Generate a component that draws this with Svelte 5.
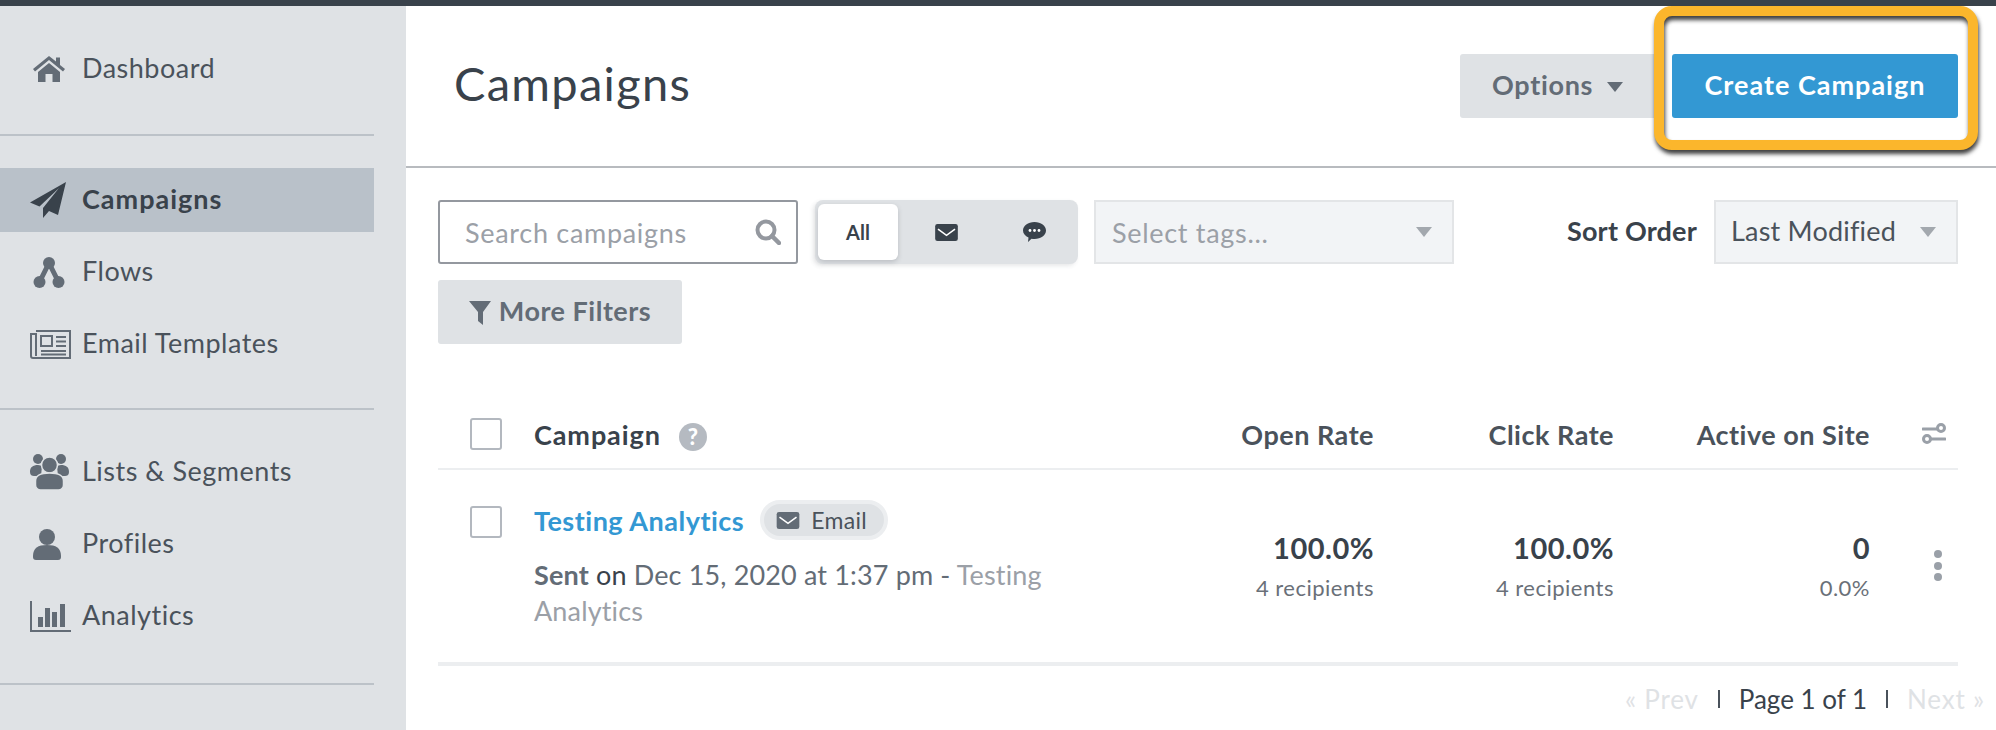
<script>
  const columns = [
    { label: 'Open Rate', value: '100.0%', sub: '4 recipients' },
    { label: 'Click Rate', value: '100.0%', sub: '4 recipients' },
    { label: 'Active on Site', value: '0', sub: '0.0%' }
  ];
</script>

{#snippet mail(w, h)}
  <svg width={w} height={h} viewBox="0 0 24 18" class="mail">
    <rect width="24" height="18" rx="2.5" fill="currentColor" />
    <path d="M3 5.5l9 6.5 9-6.5" fill="none" stroke="#fff" stroke-width="1.7" />
  </svg>
{/snippet}

{#snippet caret()}
  <svg width="16" height="10" viewBox="0 0 16 10" class="caret"><path d="M0 0h16L8 10z" fill="currentColor" /></svg>
{/snippet}

<div class="page">
  <div class="topbar"></div>
  <div class="shell">
    <aside class="sidebar">
      <nav class="group first">
        <a class="item" href="#dashboard">
          <span class="ico">
            <svg width="32" height="26" viewBox="0 0 32 26"><path d="M16 0L0 13l2 2.5L16 4l14 11.5 2-2.500-5-4V1.500h-4v4zM5 16l11-9 11 9v10h-7.500v-8h-7v8H5z" fill="currentColor" /></svg>
          </span>
          Dashboard
        </a>
      </nav>
      <nav class="group second">
        <a class="item active" href="#campaigns">
          <span class="ico">
            <svg width="36" height="36" viewBox="0 0 36 36"><path d="M36 0L0 20.500l9.500 4L29 6 13 26v10l6-7 9 4z" fill="currentColor" /></svg>
          </span>
          Campaigns
        </a>
        <a class="item" href="#flows">
          <span class="ico">
            <svg width="32" height="31" viewBox="0 0 32 31" class="flows">
              <path d="M16 6L6.500 25M16 6l9.500 19" stroke="currentColor" stroke-width="5" fill="none" />
              <circle cx="16" cy="6" r="6" fill="currentColor" />
              <circle cx="6.500" cy="25" r="6" fill="currentColor" />
              <circle cx="25.500" cy="25" r="6" fill="currentColor" />
            </svg>
          </span>
          Flows
        </a>
        <a class="item" href="#templates">
          <span class="ico">
            <svg width="41" height="29" viewBox="0 0 41 29" fill="none" stroke="currentColor" stroke-width="2">
              <path d="M6 1h34v27H3a2 2 0 0 1-2-2V4h5v22" />
              <rect x="11" y="6" width="11" height="10" />
              <path d="M26 7h10M26 11.500h10M26 16h10M11 21h25M11 24.500h25" />
            </svg>
          </span>
          Email Templates
        </a>
      </nav>
      <nav class="group third">
        <a class="item" href="#lists">
          <span class="ico">
            <svg width="39" height="36" viewBox="0 0 39 36" fill="currentColor">
              <circle cx="8" cy="5" r="5" />
              <circle cx="31" cy="5" r="5" />
              <path d="M0 18c0-5 3-7 8-7 2 0 3 1 4 1l-1 10H4c-2 0-4-1-4-4zM39 18c0-5-3-7-8-7-2 0-3 1-4 1l1 10h7c2 0 4-1 4-4z" />
              <circle cx="19.500" cy="11" r="8" stroke="#dfe2e5" stroke-width="1.500" />
              <path d="M5.500 27c0-6 5-8 14-8s14 2 14 8v4a5 5 0 0 1-5 5H10.500a5 5 0 0 1-5-5z" stroke="#dfe2e5" stroke-width="1.500" />
            </svg>
          </span>
          Lists &amp; Segments
        </a>
        <a class="item" href="#profiles">
          <span class="ico">
            <svg width="28" height="31" viewBox="0 0 28 31" class="profile" fill="currentColor">
              <circle cx="14" cy="8" r="8" />
              <path d="M0 27c0-8 5-11 14-11s14 3 14 11v1a3 3 0 0 1-3 3H3a3 3 0 0 1-3-3z" />
            </svg>
          </span>
          Profiles
        </a>
        <a class="item" href="#analytics">
          <span class="ico">
            <svg width="41" height="31" viewBox="0 0 41 31" fill="currentColor">
              <path d="M1 0v30h40" fill="none" stroke="currentColor" stroke-width="2" />
              <rect x="8" y="16" width="5" height="10" />
              <rect x="15" y="7" width="5" height="19" />
              <rect x="22" y="11" width="5" height="15" />
              <rect x="30" y="3" width="5" height="23" />
            </svg>
          </span>
          Analytics
        </a>
      </nav>
    </aside>

    <main class="main">
      <header class="header">
        <h1>Campaigns</h1>
        <div class="actions">
          <button class="btn options">Options {@render caret()}</button>
          <button class="btn create">Create Campaign</button>
          <div class="callout"></div>
        </div>
      </header>

      <section class="content">
        <div class="filters">
          <div class="search">
            <span>Search campaigns</span>
            <svg width="26" height="26" viewBox="0 0 26 26" fill="none" stroke="#94989f">
              <circle cx="11" cy="11" r="8.500" stroke-width="4" />
              <path d="M17 17l7 7" stroke-width="4.500" stroke-linecap="round" />
            </svg>
          </div>
          <div class="toggle">
            <button class="seg on">All</button>
            <button class="seg">{@render mail(23, 17)}</button>
            <button class="seg">
              <svg width="23" height="20" viewBox="0 0 23 20">
                <path d="M11.500 0C18 0 23 3.700 23 8.500S18 17 11.500 17c-1 0-2 0-3-.3L5 20l.5-4.500C2.200 14 0 11.500 0 8.500 0 3.700 5 0 11.500 0z" fill="#39424b" />
                <circle cx="7" cy="8.500" r="1.400" fill="#fff" /><circle cx="11.500" cy="8.500" r="1.400" fill="#fff" /><circle cx="16" cy="8.500" r="1.400" fill="#fff" />
              </svg>
            </button>
          </div>
          <div class="select tags"><span>Select tags...</span>{@render caret()}</div>
          <div class="sort">
            <span class="sort-label">Sort Order</span>
            <div class="select order"><span>Last Modified</span>{@render caret()}</div>
          </div>
        </div>
        <button class="btn more">
          <svg width="22" height="24" viewBox="0 0 22 24"><path d="M0 0h22l-8 11v13l-5-4v-9z" fill="currentColor" /></svg>
          More Filters
        </button>

        <div class="table">
          <div class="row head">
            <span class="check"></span>
            <div class="name-head">
              Campaign
              <span class="help">?</span>
            </div>
            {#each columns as col}
              <div class="num">{col.label}</div>
            {/each}
            <div class="tune">
              <svg width="24" height="23" viewBox="0 0 24 23" fill="none" stroke="#9aa0a8" stroke-width="3">
                <path d="M1 7h14" stroke-linecap="round" /><circle cx="19" cy="6" r="3.500" />
                <path d="M23 17H9" stroke-linecap="round" /><circle cx="5" cy="17" r="3.500" />
              </svg>
            </div>
          </div>

          <div class="row body">
            <span class="check"></span>
            <div class="info">
              <div class="title-line">
                <a href="#testing">Testing Analytics</a>
                <span class="tag">{@render mail(24, 17)} Email</span>
              </div>
              <p class="meta"><b>Sent</b> <i>on</i> Dec 15, 2020 at 1:37 pm - <em>Testing</em> <em>Analytics</em></p>
            </div>
            {#each columns as col}
              <div class="num stat">
                <strong>{col.value}</strong>
                <small>{col.sub}</small>
              </div>
            {/each}
            <div class="dots"><span></span><span></span><span></span></div>
          </div>
        </div>

        <div class="pager">
          <span class="off">« Prev</span>
          <span class="bar"></span>
          <span>Page 1 of 1</span>
          <span class="bar"></span>
          <span class="off">Next »</span>
        </div>
      </section>
    </main>
  </div>
</div>

<style>
  :global(body) {
    margin: 0;
    background: #fff;
    overflow: hidden;
  }
  .page {
    height: 730px;
    display: flex;
    flex-direction: column;
    overflow: hidden;
    font-family: Lato, "Open Sans", sans-serif;
    font-size: 27px;
    letter-spacing: 0.7px;
    color: #39424b;
  }
  .topbar {
    height: 6px;
    flex: none;
    background: #39424b;
  }
  .shell {
    flex: 1;
    display: flex;
    min-height: 0;
  }
  .sidebar {
    width: 406px;
    flex: none;
    background: #dfe2e5;
    padding-right: 32px;
    box-sizing: border-box;
  }
  .group {
    display: flex;
    flex-direction: column;
    gap: 8px;
    border-bottom: 2px solid #bcc2c8;
  }
  .group.first {
    padding: 31px 0 33px;
  }
  .group.second {
    padding: 32px 0 32px;
  }
  .group.third {
    padding: 30px 0 35px;
  }
  .item {
    height: 64px;
    box-sizing: border-box;
    display: flex;
    align-items: center;
    gap: 11px;
    padding: 0 0 3px 30px;
    color: #4a525b;
    letter-spacing: 0.5px;
    text-decoration: none;
  }
  .item.active {
    background: #b9c1c9;
    color: #39424b;
    font-weight: 700;
    letter-spacing: 1px;
  }
  .ico {
    width: 41px;
    margin-top: 3px;
    display: flex;
    color: #636c76;
  }
  .item.active .ico {
    color: #39424b;
  }
  .first .ico svg,
  .flows,
  .profile {
    margin-left: 3px;
  }

  .main {
    flex: 1;
    min-width: 0;
  }
  .header {
    height: 162px;
    box-sizing: border-box;
    border-bottom: 2px solid #b8bbbf;
    display: flex;
    align-items: center;
    justify-content: space-between;
    padding: 0 38px 0 48px;
  }
  h1 {
    margin: 0 0 6px;
    font-size: 47px;
    font-weight: 400;
    letter-spacing: 1.3px;
    color: #39424b;
  }
  .actions {
    position: relative;
    display: flex;
    gap: 12px;
  }
  .btn {
    border: 0;
    border-radius: 3px;
    height: 64px;
    padding-bottom: 5px;
    font: inherit;
    font-weight: 700;
    letter-spacing: inherit;
    display: flex;
    align-items: center;
    justify-content: center;
  }
  .btn svg {
    margin-top: 5px;
  }
  .options {
    width: 200px;
    background: #dfe2e5;
    color: #636c76;
    gap: 14px;
    justify-content: flex-start;
    padding-left: 32px;
  }
  .create {
    width: 286px;
    background: #3398d3;
    color: #fff;
    letter-spacing: 1px;
  }
  .callout {
    position: absolute;
    left: 194px;
    right: -20px;
    top: -48px;
    bottom: -32px;
    border: 10px solid #fbb62c;
    border-radius: 18px;
    filter: drop-shadow(1px 4px 2px rgba(30, 30, 30, 0.85));
  }

  .content {
    padding: 32px 38px 0 32px;
  }
  .filters {
    display: flex;
    align-items: stretch;
    height: 64px;
  }
  .search {
    width: 360px;
    box-sizing: border-box;
    border: 2px solid #94989f;
    border-radius: 3px;
    display: flex;
    align-items: center;
    justify-content: space-between;
    padding: 0 15px 0 25px;
    color: #9ba0a7;
  }
  .toggle {
    width: 263px;
    box-sizing: border-box;
    margin-left: 17px;
    padding: 4px 3px;
    background: #dfe2e5;
    border-radius: 8px;
    display: flex;
    box-shadow: -2px 2px 4px rgba(57, 66, 75, 0.12);
  }
  .seg {
    width: 88px;
    border: 0;
    background: none;
    padding: 0 0 0 8px;
    display: flex;
    align-items: center;
    justify-content: center;
    color: #39424b;
    font: inherit;
    font-size: 20px;
    font-weight: 700;
    letter-spacing: 0;
  }
  .seg.on {
    width: 80px;
    padding: 0;
    background: #fff;
    border-radius: 6px;
    box-shadow: 0 2px 5px rgba(57, 66, 75, 0.22);
  }
  .select {
    box-sizing: border-box;
    background: #f2f4f6;
    border: 2px solid #e3e5e7;
    display: flex;
    align-items: center;
    justify-content: space-between;
    color: #9ba0a7;
  }
  .select .caret {
    color: #a3a8ae;
  }
  .tags {
    width: 360px;
    margin-left: 16px;
    padding: 0 20px 0 16px;
  }
  .sort {
    margin-left: auto;
    display: flex;
    align-items: center;
    gap: 17px;
  }
  .sort-label {
    font-weight: 700;
    letter-spacing: 0.2px;
    padding-bottom: 3px;
  }
  .order {
    width: 244px;
    height: 64px;
    padding: 0 20px 3px 15px;
    color: #4a525b;
    letter-spacing: 0.2px;
  }
  .order .caret {
    margin-top: 3px;
  }
  .more {
    margin-top: 16px;
    width: 244px;
    background: #dfe2e5;
    color: #636c76;
    gap: 8px;
    letter-spacing: 0.5px;
  }

  .table {
    margin-top: 74px;
  }
  .row {
    display: grid;
    grid-template-columns: 64px 1fr 240px 240px 256px 89px;
    padding-left: 32px;
  }
  .head {
    height: 52px;
    box-sizing: border-box;
    align-items: start;
    border-bottom: 2px solid #eceef0;
    line-height: 34px;
    color: #4a525b;
  }
  .check {
    width: 32px;
    height: 32px;
    box-sizing: border-box;
    border: 2px solid #b3b8bf;
    border-radius: 3px;
  }
  .name-head {
    display: flex;
    align-items: center;
    gap: 18px;
    font-weight: 700;
    letter-spacing: 0.9px;
    color: #39424b;
  }
  .help {
    width: 28px;
    height: 28px;
    border-radius: 50%;
    background: #b5bac1;
    color: #fff;
    font-size: 22px;
    font-weight: 900;
    letter-spacing: 0;
    line-height: 28px;
    text-align: center;
    margin-top: 3px;
  }
  .num {
    text-align: right;
    font-weight: 700;
    letter-spacing: 0.5px;
    margin-right: -1px;
  }
  .tune {
    display: flex;
    justify-content: flex-end;
    padding: 4px 12px 0 0;
  }
  .body {
    height: 196px;
    box-sizing: border-box;
    border-bottom: 4px solid #eceef0;
    padding-top: 36px;
    align-items: start;
  }
  .title-line {
    display: flex;
    align-items: center;
    gap: 16px;
    height: 36px;
    margin-top: -4px;
  }
  .title-line a {
    color: #3398d3;
    font-weight: 700;
    letter-spacing: 0.5px;
    text-decoration: none;
  }
  .tag {
    display: flex;
    align-items: center;
    gap: 11px;
    height: 32px;
    padding: 0 17px 0 12px;
    background: #dfe2e5;
    border: 4px solid #eceef0;
    border-radius: 20px;
    font-size: 23px;
    letter-spacing: 0.3px;
    color: #4a525b;
  }
  .tag :global(.mail) {
    color: #636c76;
  }
  .meta {
    margin: 19px 0 0;
    max-width: 540px;
    line-height: 36px;
    letter-spacing: 0.15px;
    color: #636c76;
  }
  .meta i {
    font-style: normal;
    color: #39424b;
  }
  .meta em {
    font-style: normal;
    color: #9ba0a7;
  }
  .stat {
    font-weight: 400;
    padding-top: 22px;
  }
  .stat strong {
    display: block;
    font-size: 29px;
    line-height: 40px;
  }
  .stat small {
    display: block;
    font-size: 22px;
    line-height: 30px;
    color: #6a7078;
    margin-top: 5px;
  }
  .dots {
    display: flex;
    flex-direction: column;
    align-items: flex-end;
    gap: 3.5px;
    padding: 44px 16px 0 0;
  }
  .dots span {
    width: 8px;
    height: 8px;
    border-radius: 50%;
    background: #9aa0a8;
  }
  .pager {
    display: flex;
    justify-content: flex-end;
    align-items: center;
    gap: 19px;
    height: 66px;
    margin-right: -27px;
    font-size: 26px;
    letter-spacing: 0;
  }
  .pager .off {
    color: #dfe2e5;
    letter-spacing: 0.8px;
  }
  .pager .bar {
    width: 2px;
    height: 18px;
    background: #4a525b;
  }
</style>
